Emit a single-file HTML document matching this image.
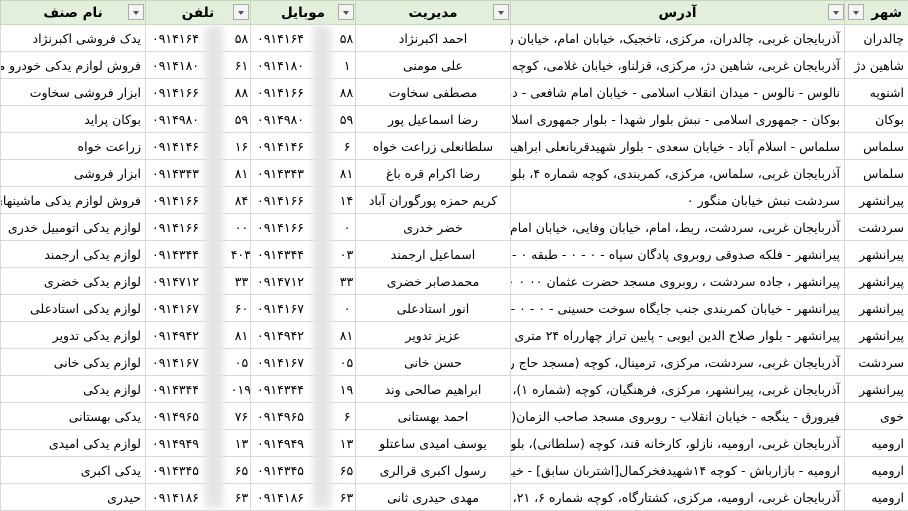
<!DOCTYPE html>
<html><head><meta charset="utf-8"><style>
*{margin:0;padding:0;box-sizing:border-box}
body{width:908px;height:508px;overflow:hidden;background:#fff;font-family:"DejaVu Sans","Liberation Sans",sans-serif;position:relative}
table{border-collapse:collapse;table-layout:fixed;position:absolute;left:0;top:0;width:908px}
td{border:1px solid #d9d9d9;height:27px;font-size:12.5px;white-space:nowrap;overflow:hidden;padding:0 4px;color:#000}
tr.h td{height:24px;background:#e2efda;font-weight:bold;font-size:13.5px;text-align:center;border-color:#c6d8bb}
.r{direction:rtl;text-align:right}
.c{text-align:center;direction:rtl}
.p{direction:ltr;text-align:left;padding-left:6px}
.b{position:absolute;width:16px;height:16px;border:1px solid #aaa;background:#f4f4f4;top:4px}
.b:after{content:"";position:absolute;left:4px;top:6px;border-left:3.5px solid transparent;border-right:3.5px solid transparent;border-top:4px solid #555}
.blur{position:absolute;top:25px;height:483px;background:#e4e4e4;filter:blur(4px)}
</style></head><body>
<table>
<colgroup><col style="width:145px"><col style="width:105px"><col style="width:105px"><col style="width:155px"><col style="width:334px"><col style="width:64px"></colgroup>
<tr class="h"><td>نام صنف</td><td>تلفن</td><td>موبایل</td><td>مدیریت</td><td>آدرس</td><td style="text-align:right;padding-right:6px">شهر</td></tr>
<tr><td class="r">یدک فروشی اکبرنژاد</td><td class="p">۰۹۱۴۱۶۴&nbsp;&nbsp;&nbsp;&nbsp;&nbsp;&nbsp;&nbsp;&nbsp;&nbsp;۵۸</td><td class="p">۰۹۱۴۱۶۴&nbsp;&nbsp;&nbsp;&nbsp;&nbsp;&nbsp;&nbsp;&nbsp;&nbsp;۵۸</td><td class="c">احمد اکبرنژاد</td><td class="r">آذربایجان غربی، چالدران، مرکزی، تاخجیک، خیابان امام، خیابان رسالت</td><td class="r">چالدران</td></tr>
<tr><td class="r">فروش لوازم یدکی خودرو مومنی</td><td class="p">۰۹۱۴۱۸۰&nbsp;&nbsp;&nbsp;&nbsp;&nbsp;&nbsp;&nbsp;&nbsp;&nbsp;۶۱</td><td class="p">۰۹۱۴۱۸۰&nbsp;&nbsp;&nbsp;&nbsp;&nbsp;&nbsp;&nbsp;&nbsp;&nbsp;&nbsp;۱</td><td class="c">علی مومنی</td><td class="r">آذربایجان غربی، شاهین دژ، مرکزی، قزلناو، خیابان غلامی، کوچه شهید</td><td class="r">شاهین دژ</td></tr>
<tr><td class="r">ابزار فروشی سخاوت</td><td class="p">۰۹۱۴۱۶۶&nbsp;&nbsp;&nbsp;&nbsp;&nbsp;&nbsp;&nbsp;&nbsp;&nbsp;۸۸</td><td class="p">۰۹۱۴۱۶۶&nbsp;&nbsp;&nbsp;&nbsp;&nbsp;&nbsp;&nbsp;&nbsp;&nbsp;۸۸</td><td class="c">مصطفی سخاوت</td><td class="r">نالوس - نالوس - میدان انقلاب اسلامی - خیابان امام شافعی - دوم</td><td class="r">اشنویه</td></tr>
<tr><td class="r">بوکان پراید</td><td class="p">۰۹۱۴۹۸۰&nbsp;&nbsp;&nbsp;&nbsp;&nbsp;&nbsp;&nbsp;&nbsp;&nbsp;۵۹</td><td class="p">۰۹۱۴۹۸۰&nbsp;&nbsp;&nbsp;&nbsp;&nbsp;&nbsp;&nbsp;&nbsp;&nbsp;۵۹</td><td class="c">رضا اسماعیل پور</td><td class="r">بوکان - جمهوری اسلامی - نبش بلوار شهدا - بلوار جمهوری اسلامی</td><td class="r">بوکان</td></tr>
<tr><td class="r">زراعت خواه</td><td class="p">۰۹۱۴۱۴۶&nbsp;&nbsp;&nbsp;&nbsp;&nbsp;&nbsp;&nbsp;&nbsp;&nbsp;۱۶</td><td class="p">۰۹۱۴۱۴۶&nbsp;&nbsp;&nbsp;&nbsp;&nbsp;&nbsp;&nbsp;&nbsp;&nbsp;&nbsp;۶</td><td class="c">سلطانعلی زراعت خواه</td><td class="r">سلماس - اسلام آباد - خیابان سعدی - بلوار شهیدقربانعلی ابراهیمی</td><td class="r">سلماس</td></tr>
<tr><td class="r">ابزار فروشی</td><td class="p">۰۹۱۴۳۴۳&nbsp;&nbsp;&nbsp;&nbsp;&nbsp;&nbsp;&nbsp;&nbsp;&nbsp;۸۱</td><td class="p">۰۹۱۴۳۴۳&nbsp;&nbsp;&nbsp;&nbsp;&nbsp;&nbsp;&nbsp;&nbsp;&nbsp;۸۱</td><td class="c">رضا اکرام قره باغ</td><td class="r">آذربایجان غربی، سلماس، مرکزی، کمربندی، کوچه شماره ۴، بلوار امام</td><td class="r">سلماس</td></tr>
<tr><td class="r">فروش لوازم یدکی ماشینهای سنگین</td><td class="p">۰۹۱۴۱۶۶&nbsp;&nbsp;&nbsp;&nbsp;&nbsp;&nbsp;&nbsp;&nbsp;&nbsp;۸۴</td><td class="p">۰۹۱۴۱۶۶&nbsp;&nbsp;&nbsp;&nbsp;&nbsp;&nbsp;&nbsp;&nbsp;&nbsp;۱۴</td><td class="c">کریم حمزه پورگوران آباد</td><td class="r">سردشت نبش خیابان منگور ۰</td><td class="r">پیرانشهر</td></tr>
<tr><td class="r">لوازم یدکی اتومبیل خدری</td><td class="p">۰۹۱۴۱۶۶&nbsp;&nbsp;&nbsp;&nbsp;&nbsp;&nbsp;&nbsp;&nbsp;&nbsp;۰۰</td><td class="p">۰۹۱۴۱۶۶&nbsp;&nbsp;&nbsp;&nbsp;&nbsp;&nbsp;&nbsp;&nbsp;&nbsp;&nbsp;۰</td><td class="c">خضر خدری</td><td class="r">آذربایجان غربی، سردشت، ربط، امام، خیابان وفایی، خیابان امام، کوچه</td><td class="r">سردشت</td></tr>
<tr><td class="r">لوازم یدکی ارجمند</td><td class="p">۰۹۱۴۳۴۴&nbsp;&nbsp;&nbsp;&nbsp;&nbsp;&nbsp;&nbsp;&nbsp;۴۰۳</td><td class="p">۰۹۱۴۳۴۴&nbsp;&nbsp;&nbsp;&nbsp;&nbsp;&nbsp;&nbsp;&nbsp;&nbsp;۰۳</td><td class="c">اسماعیل ارجمند</td><td class="r">پیرانشهر - فلکه صدوقی روبروی پادگان سپاه - ۰ - ۰ - طبقه ۰ - ۰</td><td class="r">پیرانشهر</td></tr>
<tr><td class="r">لوازم یدکی خضری</td><td class="p">۰۹۱۴۷۱۲&nbsp;&nbsp;&nbsp;&nbsp;&nbsp;&nbsp;&nbsp;&nbsp;&nbsp;۳۳</td><td class="p">۰۹۱۴۷۱۲&nbsp;&nbsp;&nbsp;&nbsp;&nbsp;&nbsp;&nbsp;&nbsp;&nbsp;۳۳</td><td class="c">محمدصابر خضری</td><td class="r">پیرانشهر ، جاده سردشت ، روبروی مسجد حضرت عثمان ۰۰ ۰ ۰ ۰</td><td class="r">پیرانشهر</td></tr>
<tr><td class="r">لوازم یدکی استادعلی</td><td class="p">۰۹۱۴۱۶۷&nbsp;&nbsp;&nbsp;&nbsp;&nbsp;&nbsp;&nbsp;&nbsp;&nbsp;۶۰</td><td class="p">۰۹۱۴۱۶۷&nbsp;&nbsp;&nbsp;&nbsp;&nbsp;&nbsp;&nbsp;&nbsp;&nbsp;&nbsp;۰</td><td class="c">انور استادعلی</td><td class="r">پیرانشهر - خیابان کمربندی جنب جایگاه سوخت حسینی - ۰ - ۰ - ۰ - ۰</td><td class="r">پیرانشهر</td></tr>
<tr><td class="r">لوازم یدکی تدویر</td><td class="p">۰۹۱۴۹۴۲&nbsp;&nbsp;&nbsp;&nbsp;&nbsp;&nbsp;&nbsp;&nbsp;&nbsp;۸۱</td><td class="p">۰۹۱۴۹۴۲&nbsp;&nbsp;&nbsp;&nbsp;&nbsp;&nbsp;&nbsp;&nbsp;&nbsp;۸۱</td><td class="c">عزیز تدویر</td><td class="r">پیرانشهر - بلوار صلاح الدین ایوبی - پایین تراز چهارراه ۲۴ متری - ۰</td><td class="r">پیرانشهر</td></tr>
<tr><td class="r">لوازم یدکی خانی</td><td class="p">۰۹۱۴۱۶۷&nbsp;&nbsp;&nbsp;&nbsp;&nbsp;&nbsp;&nbsp;&nbsp;&nbsp;۰۵</td><td class="p">۰۹۱۴۱۶۷&nbsp;&nbsp;&nbsp;&nbsp;&nbsp;&nbsp;&nbsp;&nbsp;&nbsp;۰۵</td><td class="c">حسن خانی</td><td class="r">آذربایجان غربی، سردشت، مرکزی، ترمینال، کوچه (مسجد حاج رسول)</td><td class="r">سردشت</td></tr>
<tr><td class="r">لوازم یدکی</td><td class="p">۰۹۱۴۳۴۴&nbsp;&nbsp;&nbsp;&nbsp;&nbsp;&nbsp;&nbsp;&nbsp;۰۱۹</td><td class="p">۰۹۱۴۳۴۴&nbsp;&nbsp;&nbsp;&nbsp;&nbsp;&nbsp;&nbsp;&nbsp;&nbsp;۱۹</td><td class="c">ابراهیم صالحی وند</td><td class="r">آذربایجان غربی، پیرانشهر، مرکزی، فرهنگیان، کوچه (شماره ۱)، کوچه</td><td class="r">پیرانشهر</td></tr>
<tr><td class="r">یدکی بهستانی</td><td class="p">۰۹۱۴۹۶۵&nbsp;&nbsp;&nbsp;&nbsp;&nbsp;&nbsp;&nbsp;&nbsp;&nbsp;۷۶</td><td class="p">۰۹۱۴۹۶۵&nbsp;&nbsp;&nbsp;&nbsp;&nbsp;&nbsp;&nbsp;&nbsp;&nbsp;&nbsp;۶</td><td class="c">احمد بهستانی</td><td class="r">فیرورق - ینگجه - خیابان انقلاب - روبروی مسجد صاحب الزمان(عج)</td><td class="r">خوی</td></tr>
<tr><td class="r">لوازم یدکی امیدی</td><td class="p">۰۹۱۴۹۴۹&nbsp;&nbsp;&nbsp;&nbsp;&nbsp;&nbsp;&nbsp;&nbsp;&nbsp;۱۳</td><td class="p">۰۹۱۴۹۴۹&nbsp;&nbsp;&nbsp;&nbsp;&nbsp;&nbsp;&nbsp;&nbsp;&nbsp;۱۳</td><td class="c">یوسف امیدی ساعتلو</td><td class="r">آذربایجان غربی، ارومیه، نازلو، کارخانه قند، کوچه (سلطانی)، بلوار</td><td class="r">ارومیه</td></tr>
<tr><td class="r">یدکی اکبری</td><td class="p">۰۹۱۴۳۴۵&nbsp;&nbsp;&nbsp;&nbsp;&nbsp;&nbsp;&nbsp;&nbsp;&nbsp;۶۵</td><td class="p">۰۹۱۴۳۴۵&nbsp;&nbsp;&nbsp;&nbsp;&nbsp;&nbsp;&nbsp;&nbsp;&nbsp;۶۵</td><td class="c">رسول اکبری قرالری</td><td class="r">ارومیه - بازارباش - کوچه ۱۴شهیدفخرکمال[اشتربان سابق] - خیابان</td><td class="r">ارومیه</td></tr>
<tr><td class="r">حیدری</td><td class="p">۰۹۱۴۱۸۶&nbsp;&nbsp;&nbsp;&nbsp;&nbsp;&nbsp;&nbsp;&nbsp;&nbsp;۶۳</td><td class="p">۰۹۱۴۱۸۶&nbsp;&nbsp;&nbsp;&nbsp;&nbsp;&nbsp;&nbsp;&nbsp;&nbsp;۶۳</td><td class="c">مهدی حیدری ثانی</td><td class="r">آذربایجان غربی، ارومیه، مرکزی، کشتارگاه، کوچه شماره ۶، ۲۱، خیابان</td><td class="r">ارومیه</td></tr>
</table>
<div class="blur" style="left:205px;width:18px"></div>
<div class="blur" style="left:313px;width:18px"></div>
<div class="b" style="left:128px"></div>
<div class="b" style="left:233px"></div>
<div class="b" style="left:338px"></div>
<div class="b" style="left:493px"></div>
<div class="b" style="left:828px"></div>
<div class="b" style="left:848px"></div>
</body></html>
